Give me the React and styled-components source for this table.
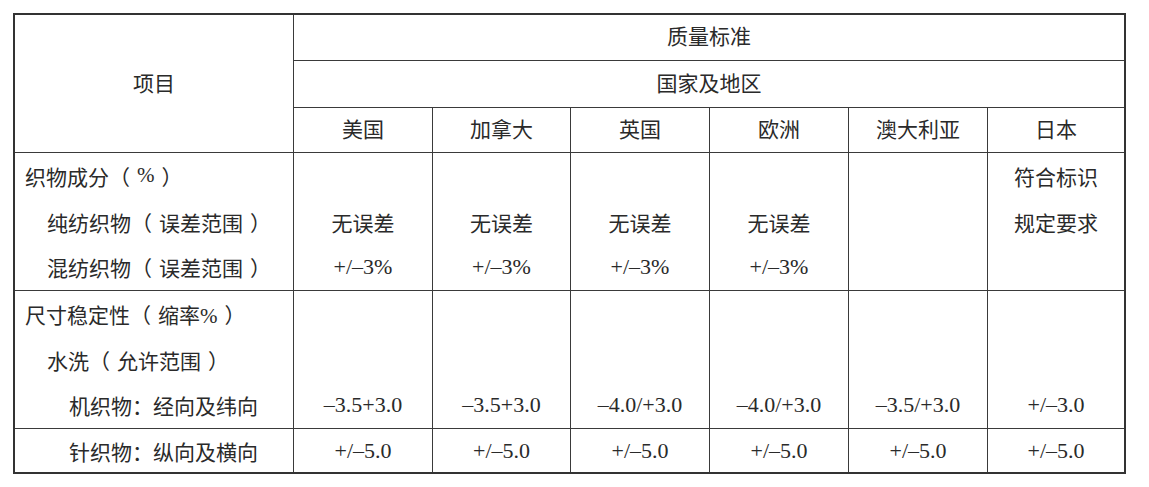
import React from 'react';
import styled, { createGlobalStyle } from 'styled-components';

const GlobalStyle = createGlobalStyle`
  html, body {
    margin: 0;
    padding: 0;
    background: #ffffff;
  }
  body {
    font-family: 'Liberation Serif', 'Noto Sans CJK SC', serif;
    color: #2a2a2a;
  }
`;

const Page = styled.div`
  padding: 13px 0 0 13px;
`;

const Table = styled.div`
  display: grid;
  grid-template-columns: 278px 138px 137px 138px 138px 138px 136px;
  grid-template-rows: 45px 46px 44px 137px 137px 43px;
  gap: 1px;
  width: 1109px;
  background: #3a3a3a;
  border: 2px solid #333333;
`;

const Cell = styled.div`
  background: #ffffff;
  grid-column: ${(p) => p.col || 'auto'};
  grid-row: ${(p) => p.row || 'auto'};
  display: flex;
  align-items: center;
  justify-content: center;
  font-size: 21px;
  line-height: 1;
  white-space: nowrap;
  padding-top: ${(p) => (p.lift ? '0' : '1px')};
`;

const StackCell = styled.div`
  background: #ffffff;
  display: flex;
  flex-direction: column;
`;

const Line = styled.div`
  flex: 1;
  display: flex;
  align-items: center;
  justify-content: ${(p) => (p.left ? 'flex-start' : 'center')};
  padding-left: ${(p) => (p.left ? `${10 + (p.indent || 0) * 22}px` : '0')};
  font-size: ${(p) => (p.num ? '22px' : '21px')};
  white-space: nowrap;
`;

// the reference uses centred full-width brackets, Noto pushes them to one side
const Paren = styled.span`
  margin-left: ${(p) => (p.close ? '7px' : '0')};
  margin-right: ${(p) => (p.close ? '0' : '7px')};
`;

const Bracketed = ({ head, inner }) => (
  <>
    {head}
    <Paren>（</Paren>
    {inner}
    <Paren close>）</Paren>
  </>
);

const countries = ['美国', '加拿大', '英国', '欧洲', '澳大利亚', '日本'];

const fabric = [
  ['', '无误差', '+/–3%'],
  ['', '无误差', '+/–3%'],
  ['', '无误差', '+/–3%'],
  ['', '无误差', '+/–3%'],
  ['', '', ''],
  ['符合标识', '规定要求', ''],
];

const woven = ['–3.5+3.0', '–3.5+3.0', '–4.0/+3.0', '–4.0/+3.0', '–3.5/+3.0', '+/–3.0'];

const isNum = (t) => /^[+–\-\d]/.test(t);

const App = () => (
  <>
    <GlobalStyle />
    <Page>
      <Table>
        <Cell col="1" row="1 / span 3">项目</Cell>
        <Cell col="2 / span 6" row="1" lift>质量标准</Cell>
        <Cell col="2 / span 6" row="2">国家及地区</Cell>
        {countries.map((c) => (
          <Cell key={c} row="3">{c}</Cell>
        ))}

        <StackCell>
          <Line left><Bracketed head="织物成分" inner="%" /></Line>
          <Line left indent={1}><Bracketed head="纯纺织物" inner="误差范围" /></Line>
          <Line left indent={1}><Bracketed head="混纺织物" inner="误差范围" /></Line>
        </StackCell>
        {fabric.map((col, i) => (
          <StackCell key={i}>
            {col.map((t, j) => (
              <Line key={j} num={isNum(t)}>{t}</Line>
            ))}
          </StackCell>
        ))}

        <StackCell>
          <Line left><Bracketed head="尺寸稳定性" inner="缩率%" /></Line>
          <Line left indent={1}><Bracketed head="水洗" inner="允许范围" /></Line>
          <Line left indent={2}>机织物：经向及纬向</Line>
        </StackCell>
        {woven.map((t, i) => (
          <StackCell key={i}>
            <Line />
            <Line />
            <Line num>{t}</Line>
          </StackCell>
        ))}

        <StackCell>
          <Line left indent={2}>针织物：纵向及横向</Line>
        </StackCell>
        {countries.map((c) => (
          <StackCell key={c}>
            <Line num>+/–5.0</Line>
          </StackCell>
        ))}
      </Table>
    </Page>
  </>
);

export default App;
